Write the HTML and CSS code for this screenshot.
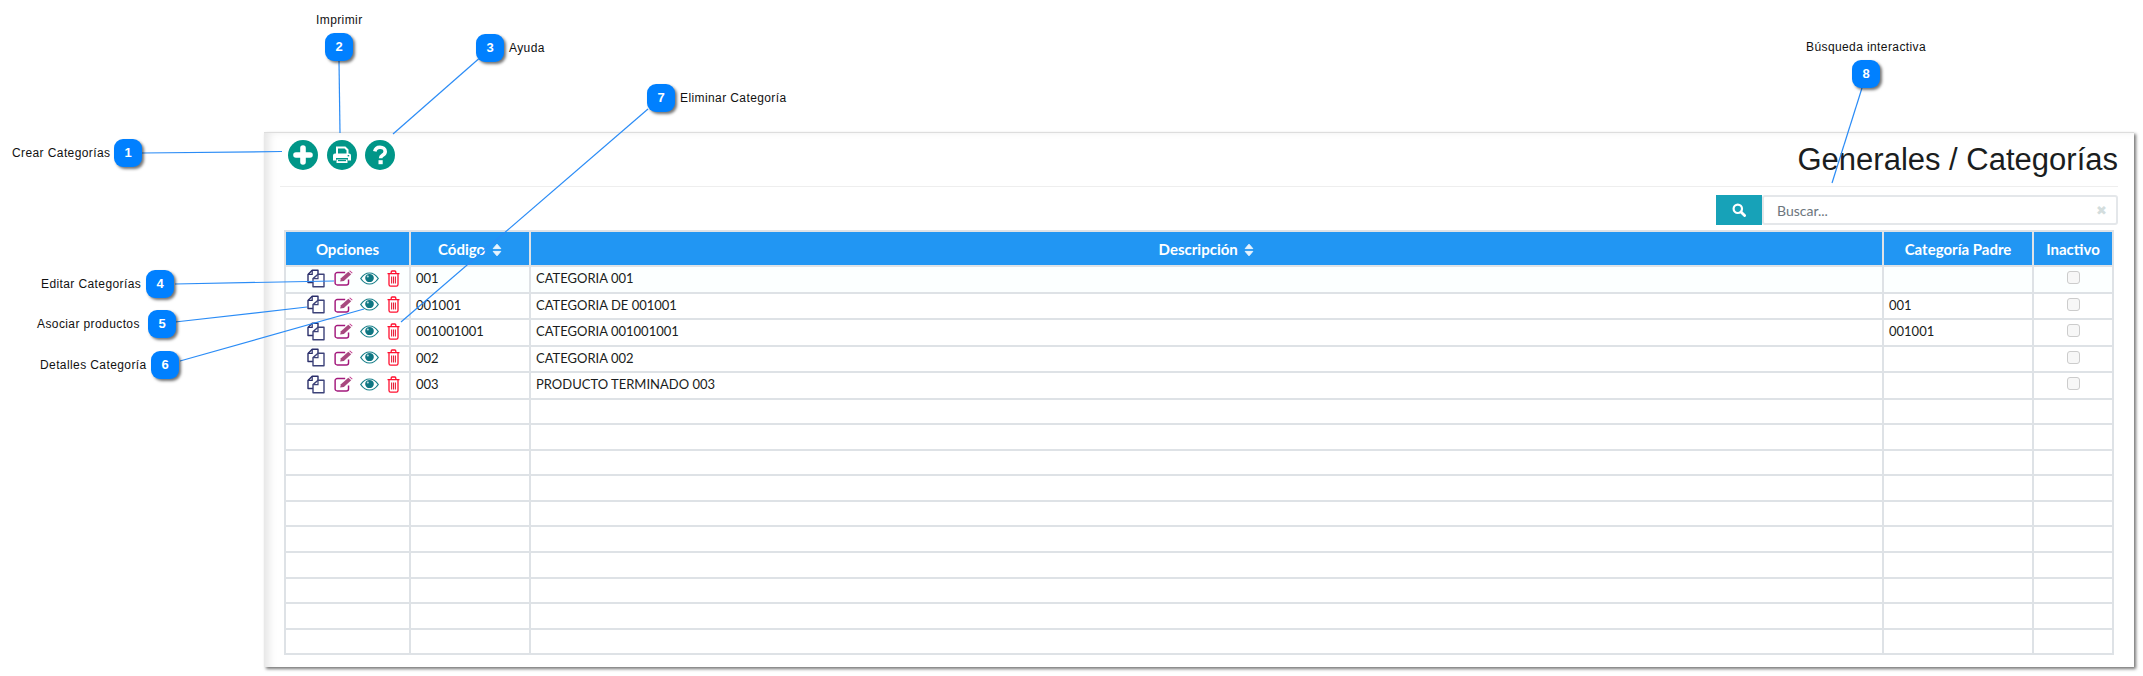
FILE: index.html
```html
<!DOCTYPE html>
<html lang="es">
  <head>
    <meta charset="UTF-8" />
    <title>Generales / Categorías</title>
    <link rel="stylesheet" href="styles.css">
  </head>
  <body>
    <svg width="0" height="0" class="defs">
      <symbol id="i-copy" viewBox="0 0 18 19">
        <path d="M11 5V1.2H5.2L1 5.4V13.5H6" fill="none" stroke="#2b2f6b" stroke-width="1.4" stroke-linejoin="round" />
        <path d="M5.2 1.2V5.4H1" fill="none" stroke="#2b2f6b" stroke-width="1.2" />
        <path d="M11 5.2H17V17.8H6V9.6Z" fill="#fff" stroke="#3c4279" stroke-width="1.4" stroke-linejoin="round" />
        <path d="M11 5.2V9.6H6" fill="none" stroke="#3c4279" stroke-width="1.2" />
      </symbol>
      <symbol id="i-edit" viewBox="0 0 17 16" preserveAspectRatio="none">
        <path d="M13 9.5V13A2 2 0 0 1 11 15H3A2 2 0 0 1 1 13V4.5A2 2 0 0 1 3 2.5H10" fill="none" stroke="#a3197c" stroke-width="1.3" />
        <path d="M5.5 11.5L6.2 8.3L12.8 1.7L15.4 4.3L8.8 10.9Z" fill="#a8487f" />
        <path d="M13.6 0.9L14.3 0.4L16.6 2.7L16.1 3.5Z" fill="#c23a8f" />
      </symbol>
      <symbol id="i-eye" viewBox="0 0 18 13" preserveAspectRatio="none">
        <path d="M0.7 6.5C3 2.8 5.8 1 9 1S15 2.8 17.3 6.5C15 10.2 12.2 12 9 12S3 10.2 0.7 6.5Z" fill="#fff" stroke="#177f89" stroke-width="1.2" />
        <circle cx="9" cy="6" r="4.1" fill="#0f7682" />
        <circle cx="7.4" cy="4.6" r="1" fill="#b7dadd" />
      </symbol>
      <symbol id="i-trash" viewBox="0 0 13 17">
        <path d="M0.5 3.7H12.5M4.2 3.5V2A1 1 0 0 1 5.2 1H7.8A1 1 0 0 1 8.8 2V3.5" fill="none" stroke="#ff1030" stroke-width="1.3" />
        <path d="M2 4V14.6A1.6 1.6 0 0 0 3.6 16.2H9.4A1.6 1.6 0 0 0 11 14.6V4" fill="none" stroke="#ff1030" stroke-width="1.3" />
        <path d="M4.6 6.5V13.6M6.5 6.5V13.6M8.4 6.5V13.6" fill="none" stroke="#e8203a" stroke-width="1.1" />
      </symbol>
      <symbol id="i-sort" viewBox="0 0 10 14">
        <path d="M1.2 5.6L5 1.2L8.8 5.6ZM1.2 8.4H8.8L5 12.8Z" fill="#e8f4fe" stroke="#e8f4fe" stroke-linejoin="round" />
      </symbol>
    </svg>

    <div class="panel">
      <div class="head">
        <div class="tools">
          <svg class="tool" viewBox="0 0 30 30">
            <circle cx="15" cy="15" r="15" fill="#009688" />
            <path d="M15 8V22M8 15H22" stroke="#fff" stroke-width="5.6" stroke-linecap="round" />
          </svg>
          <svg class="tool" viewBox="0 0 30 30">
            <circle cx="15" cy="15" r="15" fill="#009688" />
            <path d="M10 14V7.5H18L20.5 10V14" fill="none" stroke="#fff" stroke-width="2" />
            <path d="M8 13.5H22A2 2 0 0 1 24 15.5V20.5H21V18H9V20.5H6V15.5A2 2 0 0 1 8 13.5Z" fill="#fff" />
            <path d="M9.5 19.5H20.5V23H9.5Z" fill="#fff" />
            <path d="M11 20.6H19" stroke="#009688" stroke-width="1.2" />
            <rect x="20.6" y="15" width="1.6" height="1.4" fill="#009688" />
          </svg>
          <svg class="tool" viewBox="0 0 30 30">
            <circle cx="15" cy="15" r="15" fill="#009688" />
            <path d="M9.8 11.4C10.3 8.7 12.3 7.3 15 7.3C18 7.3 20.2 9 20.2 11.5C20.2 13.4 19 14.4 17.6 15.3C16.3 16.1 15.6 16.8 15.6 18.3" fill="none" stroke="#fff" stroke-width="3.6" />
            <rect x="13.5" y="20.2" width="4.2" height="4" fill="#fff" />
          </svg>
        </div>
        <h1 class="title">Generales / Categorías</h1>
      </div>

      <div class="search">
        <span class="search-btn">
          <svg viewBox="0 0 14 14" width="14" height="14">
            <circle cx="5.8" cy="5.8" r="4.2" fill="none" stroke="#fff" stroke-width="2.2" />
            <path d="M9 9L12.6 12.6" stroke="#fff" stroke-width="2.8" stroke-linecap="round" />
          </svg>
        </span>
        <div class="search-box">
          <span class="placeholder">Buscar...</span>
          <span class="clear">✖</span>
        </div>
      </div>

      <table class="grid">
        <thead>
          <tr>
            <th class="col-op">Opciones</th>
            <th class="col-cod">Código <svg class="sort"><use href="#i-sort" /></svg></th>
            <th>Descripción <svg class="sort"><use href="#i-sort" /></svg></th>
            <th class="col-padre">Categoría Padre</th>
            <th class="col-in">Inactivo</th>
          </tr>
        </thead>
        <tbody id="rows"></tbody>
      </table>
    </div>

    <svg class="lines" width="2143" height="676">
      <path d="M142 153L282 151.5" />
      <path d="M339 61L340 133" />
      <path d="M478.5 59L393 134" />
      <path d="M175 284L334 281" />
      <path d="M175 322L307 307" />
      <path d="M180 361L364 309" />
      <path d="M648 109L401 322" />
      <path d="M1862 88L1832 183" />
    </svg>

    <span class="badge b1">1</span><span class="label l1">Crear Categorías</span>
    <span class="badge b2">2</span><span class="label l2">Imprimir</span>
    <span class="badge b3">3</span><span class="label l3">Ayuda</span>
    <span class="badge b4">4</span><span class="label l4">Editar Categorías</span>
    <span class="badge b5">5</span><span class="label l5">Asociar productos</span>
    <span class="badge b6">6</span><span class="label l6">Detalles Categoría</span>
    <span class="badge b7">7</span><span class="label l7">Eliminar Categoría</span>
    <span class="badge b8">8</span><span class="label l8">Búsqueda interactiva</span>

    <script>
      const categorias = [
        ["001", "CATEGORIA 001", ""],
        ["001001", "CATEGORIA DE 001001", "001"],
        ["001001001", "CATEGORIA 001001001", "001001"],
        ["002", "CATEGORIA 002", ""],
        ["003", "PRODUCTO TERMINADO 003", ""],
      ];
      const tbody = document.getElementById("rows");
      categorias.forEach((cat) => {
        const row = tbody.insertRow();
        row.className = "data";
        row.innerHTML = `
          <td class="opts">
            <svg class="ic-copy"><use href="#i-copy" /></svg>
            <svg class="ic-edit"><use href="#i-edit" /></svg>
            <svg class="ic-eye"><use href="#i-eye" /></svg>
            <svg class="ic-trash"><use href="#i-trash" /></svg>
          </td>
          <td class="txt">${cat[0]}</td>
          <td class="txt">${cat[1]}</td>
          <td class="txt">${cat[2]}</td>
          <td class="center"><span class="check"></span></td>
        `;
      });
      for (let i = 0; i < 10; i++) {
        const row = tbody.insertRow();
        row.className = "empty";
        row.innerHTML = "<td></td><td></td><td></td><td></td><td></td>";
      }
    </script>
  </body>
</html>
```

FILE: styles.css
```css
* {
  box-sizing: border-box;
  margin: 0;
  padding: 0;
}
body {
  position: relative;
  width: 2143px;
  height: 676px;
  overflow: hidden;
  background: #fff;
  font-family: "Lato", sans-serif;
  color: #1a1d20;
}
.defs {
  position: absolute;
}
.panel {
  width: 1870px;
  height: 535px;
  margin: 132px 0 0 264px;
  padding: 1px 16px 0 16px;
  background: #fff;
  border-top: 1px solid #ddd;
  box-shadow: 2px 2px 3px #777, inset 9px 2px 8px -4px rgba(0, 0, 0, 0.1);
}
.head {
  display: flex;
  justify-content: space-between;
  height: 53px;
  border-bottom: 1px solid #eee;
}
.tools {
  display: flex;
  gap: 8.5px;
  padding: 6px 0 0 8px;
}
.tool {
  width: 30px;
  height: 30px;
}
.title {
  font-family: "Liberation Sans", sans-serif;
  font-size: 31px;
  font-weight: 400;
  line-height: 34px;
  padding-top: 9px;
}
.search {
  display: flex;
  justify-content: flex-end;
  margin-top: 8px;
  height: 30px;
}
.search-btn {
  display: flex;
  align-items: center;
  justify-content: center;
  width: 46px;
  background: #17a2b8;
}
.search-box {
  display: flex;
  align-items: center;
  justify-content: space-between;
  width: 356px;
  padding: 0 9px 0 13px;
  border: 2px solid #e4e7ea;
  border-radius: 3px;
}
.placeholder {
  font-size: 14px;
  color: #6c757d;
}
.clear {
  font-family: "DejaVu Sans", sans-serif;
  font-size: 13px;
  color: #d3dddd;
}
.grid {
  width: 1830px;
  margin: 5px 0 0 4px;
  border-collapse: collapse;
  table-layout: fixed;
  font-size: 13px;
}
.grid th,
.grid td {
  border: 2px solid #dee2e6;
}
.grid th {
  height: 35px;
  background: #2196f3;
  color: #fff;
  font-size: 15px;
  font-weight: 700;
  text-align: center;
}
.grid td {
  padding: 0 5px;
}
.grid td.txt {
  padding-bottom: 2px;
}
.col-op {
  width: 125px;
}
.col-cod {
  width: 120px;
}
.col-padre {
  width: 150px;
}
.col-in {
  width: 80px;
}
.sort {
  width: 10px;
  height: 14px;
  margin-left: 3px;
  vertical-align: -2px;
}
.data {
  height: 26.5px;
}
.empty {
  height: 25.6px;
}
.data:first-child {
  background: #fcffff;
}
.grid td.opts {
  padding: 0 0 2px 21px;
  font-size: 0;
  white-space: nowrap;
}
.opts svg {
  vertical-align: middle;
}
.ic-copy {
  width: 18px;
  height: 19px;
  margin-right: 9px;
}
.ic-edit {
  width: 19px;
  height: 16px;
  margin-right: 7px;
}
.ic-eye {
  width: 19px;
  height: 13px;
  margin-right: 8px;
}
.ic-trash {
  width: 13px;
  height: 17px;
}
.center {
  text-align: center;
}
.check {
  display: inline-block;
  width: 13px;
  height: 13px;
  margin-bottom: 4px;
  vertical-align: middle;
  background: #f7f7f7;
  border: 1px solid #ccc;
  border-radius: 3px;
}
/* callouts on top of the screenshot */
.lines {
  position: absolute;
  left: 0;
  top: 0;
  pointer-events: none;
}
.lines path {
  fill: none;
  stroke: #2b8cf6;
  stroke-width: 1.2;
}
.badge {
  position: absolute;
  width: 28px;
  height: 28px;
  background: #0080ff;
  border-radius: 9px;
  box-shadow: 2px 2px 3px rgba(0, 0, 0, 0.55);
  color: #fff;
  font-family: "Liberation Sans", sans-serif;
  font-size: 13px;
  font-weight: 700;
  line-height: 28px;
  text-align: center;
}
.label {
  position: absolute;
  font-family: "Liberation Sans", sans-serif;
  font-size: 12px;
  line-height: 14px;
  letter-spacing: 0.4px;
  color: #111;
  white-space: nowrap;
}
.b1 { left: 114px; top: 139px; }
.b2 { left: 325px; top: 33px; }
.b3 { left: 476px; top: 34px; }
.b4 { left: 146px; top: 270px; }
.b5 { left: 148px; top: 310px; }
.b6 { left: 151px; top: 351px; }
.b7 { left: 647px; top: 84px; }
.b8 { left: 1852px; top: 60px; }
.l1 { left: 12px; top: 146px; }
.l2 { left: 316px; top: 13px; }
.l3 { left: 509px; top: 41px; }
.l4 { left: 41px; top: 277px; }
.l5 { left: 37px; top: 317px; }
.l6 { left: 40px; top: 358px; }
.l7 { left: 680px; top: 91px; }
.l8 { left: 1806px; top: 40px; }
```
